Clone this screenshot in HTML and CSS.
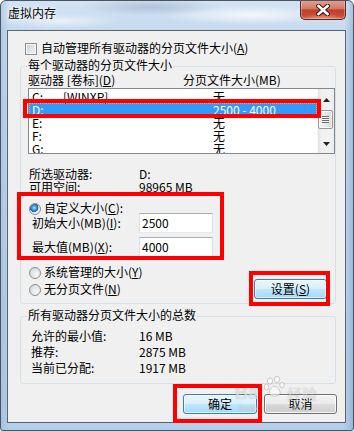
FILE: index.html
```html
<!DOCTYPE html>
<html lang="zh-CN">
<head>
<meta charset="utf-8">
<title>虚拟内存</title>
<link rel="stylesheet" href="styles.css">
</head>
<body>
<div class="window">
  <div class="titlebar">
    <span class="title">虚拟内存</span>
    <button class="close" aria-label="关闭">
      <svg width="14" height="12" viewBox="0 0 14 12">
        <path d="M2.5 2 L11.5 10 M11.5 2 L2.5 10" stroke="#3b1712" stroke-width="4.6" stroke-linecap="square"/>
        <path d="M2.5 2 L11.5 10 M11.5 2 L2.5 10" stroke="#ffffff" stroke-width="2.6" stroke-linecap="square"/>
      </svg>
    </button>
  </div>
  <div class="client">
    <div class="check-row"><span class="checkbox"></span><span>自动管理所有驱动器的分页文件大小(<u>A</u>)</span></div>

    <fieldset class="group group-drives">
      <legend>每个驱动器的分页文件大小</legend>
      <div class="list-head"><span class="col-drive">驱动器 [卷标](<u>D</u>)</span><span>分页文件大小(MB)</span></div>
      <div class="listbox">
        <div class="rows">
          <div class="row"><span>C:</span><span>[WINXP]</span><span>无</span></div>
          <div class="row selected"><span>D:</span><span></span><span>2500 - 4000</span></div>
          <div class="row"><span>E:</span><span></span><span>无</span></div>
          <div class="row"><span>F:</span><span></span><span>无</span></div>
          <div class="row"><span>G:</span><span></span><span>无</span></div>
        </div>
        <div class="scrollbar">
          <div class="sb-btn sb-up"><svg width="7" height="4" viewBox="0 0 7 4"><path d="M3.5 0 L7 4 L0 4 Z" fill="#222"/></svg></div>
          <div class="sb-track"><div class="sb-thumb"><span class="grip"></span></div></div>
          <div class="sb-btn sb-down"><svg width="7" height="4" viewBox="0 0 7 4"><path d="M0 0 L7 0 L3.5 4 Z" fill="#222"/></svg></div>
        </div>
      </div>
      <div class="info">
        <span>所选驱动器:</span><span>D:</span>
        <span>可用空间:</span><span>98965 MB</span>
      </div>
      <div class="options">
        <div class="options-left">
          <div class="radio-row"><span class="radio checked"></span><span>自定义大小(<u>C</u>):</span></div>
          <div class="field-row"><span class="field-label">初始大小(MB)(<u>I</u>):</span><span class="textbox">2500</span></div>
          <div class="field-row field-second"><span class="field-label">最大值(MB)(<u>X</u>):</span><span class="textbox">4000</span></div>
          <div class="radio-row radio-sys"><span class="radio"></span><span>系统管理的大小(<u>Y</u>)</span></div>
          <div class="radio-row radio-none"><span class="radio"></span><span>无分页文件(<u>N</u>)</span></div>
        </div>
        <button class="btn btn-blue btn-set">设置(<u>S</u>)</button>
      </div>
    </fieldset>

    <fieldset class="group group-total">
      <legend>所有驱动器分页文件大小的总数</legend>
      <div class="totals">
        <span>允许的最小值:</span><span>16 MB</span>
        <span>推荐:</span><span>2875 MB</span>
        <span>当前已分配:</span><span>1917 MB</span>
      </div>
    </fieldset>

    <div class="actions">
      <button class="btn btn-blue btn-ok">确定</button>
      <button class="btn btn-cancel">取消</button>
    </div>
  </div>

  <div class="watermark">
    <div class="wm-line">
      <span class="wm-bai">Bai</span>
      <svg class="wm-paw" width="24" height="24" viewBox="0 0 24 24">
        <g fill="rgba(255,255,255,0.55)" stroke="rgba(120,120,120,0.35)" stroke-width="1">
          <ellipse cx="7" cy="6" rx="2.6" ry="3.2"/>
          <ellipse cx="14" cy="4.5" rx="2.6" ry="3.2"/>
          <ellipse cx="3.5" cy="12" rx="2.3" ry="2.8"/>
          <ellipse cx="19" cy="10" rx="2.3" ry="2.8"/>
          <path d="M11 11 C7 13 5 17 7 20 C9 22 14 21 16 20 C19 18 16 12 11 11 Z"/>
        </g>
      </svg>
      <span class="wm-jy">经验</span>
    </div>
    <span class="wm-url">jingyan.baidu.com</span>
  </div>

  <div class="mark mark-list"></div>
  <div class="mark mark-custom"></div>
  <div class="mark mark-set"></div>
  <div class="mark mark-ok"></div>
</div>
</body>
</html>
```
FILE: styles.css
```css
* { box-sizing: border-box; }
html, body { margin: 0; padding: 0; background: #ffffff; }
body {
  font-family: "Noto Sans CJK SC", "Noto Sans", sans-serif;
  font-size: 12px;
  color: #000;
}
u { text-underline-offset: 1px; }

.window {
  position: relative;
  width: 354px;
  height: 431px;
  border: 1px solid #4a5562;
  border-radius: 6px 6px 3px 3px;
  padding: 0 7px 7px 6px;
  display: flex;
  flex-direction: column;
  overflow: hidden;
  background:
    radial-gradient(ellipse 70px 9px at 150px 6px, rgba(150,170,195,0.55), rgba(150,170,195,0) 100%),
    radial-gradient(ellipse 90px 10px at 250px 14px, rgba(255,255,255,0.75), rgba(255,255,255,0) 100%),
    radial-gradient(ellipse 60px 8px at 60px 20px, rgba(255,255,255,0.6), rgba(255,255,255,0) 100%),
    linear-gradient(to right, rgba(140,170,205,0.35) 0, rgba(140,170,205,0) 8px, rgba(140,170,205,0) 344px, rgba(120,155,200,0.45) 352px),
    linear-gradient(to bottom, #d3e3f3 0, #c5d9ee 30px, #bad1ea 60%, #b4cde8 100%);
}

/* title bar */
.titlebar {
  height: 29px;
  display: flex;
  align-items: flex-start;
  padding: 6px 0 0 1px;
}
.title {
  line-height: 12px;
  font-size: 12px;
  color: #000;
  text-shadow: 0 0 6px #fff, 0 0 3px #fff;
}
.close {
  margin: -7px 0 0 auto;
  width: 46px;
  height: 20px;
  padding: 0;
  border: 1px solid #5b2720;
  border-top: none;
  border-radius: 0 0 5px 5px;
  background:
    radial-gradient(ellipse 20px 6px at 50% 100%, rgba(255,170,140,0.7), rgba(255,170,140,0) 100%),
    linear-gradient(#e3a293 0%, #d27a68 45%, #c0402d 52%, #c54a34 80%, #d4644b 100%);
  box-shadow: inset 0 0 0 1px rgba(255,255,255,0.3);
  display: flex;
  align-items: center;
  justify-content: center;
}

/* client area */
.client {
  width: 339px;
  height: 393px;
  border: 1px solid #5a6572;
  background: #f0f0f0;
  display: flex;
  flex-direction: column;
  align-items: flex-start;
}

.check-row {
  display: flex;
  margin: 11px 0 0 17px;
  height: 12px;
  line-height: 12px;
}
.checkbox {
  width: 12px;
  height: 12px;
  margin: 1px 4px 0 0;
  border: 1px solid #8e8f8f;
  background: linear-gradient(135deg, #c9cdd2 0%, #e4e6e8 55%, #f6f6f6 100%);
  box-shadow: inset 0 0 0 1px #f4f4f4;
}

/* group boxes */
.group {
  margin: 5px 0 0 12px;
  width: 316px;
  min-width: 0;
  border: 1px solid #d5dfe5;
  border-radius: 3px;
  padding: 0 0 4px 0;
}
.group legend {
  margin-left: 6px;
  padding: 0 1px 3px;
  line-height: 12px;
}
.group-total { padding-bottom: 7px; }

.list-head {
  display: flex;
  margin-left: 7px;
  height: 12px;
  line-height: 12px;
}
.col-drive { width: 155px; }

.listbox {
  margin: 2px 0 0 7px;
  width: 307px;
  height: 66px;
  border: 1px solid #828790;
  background: #fff;
  display: flex;
  overflow: hidden;
}
.rows {
  flex: 1;
  padding-top: 1px;
  overflow: hidden;
}
.row {
  height: 13px;
  line-height: 13px;
  display: grid;
  grid-template-columns: 31px 150px 1fr;
  padding-left: 3px;
  white-space: nowrap;
}
.row.selected {
  background: #3399ff;
  color: #fff;
  outline: 1px dotted #f0a24a;
  outline-offset: -1px;
}
.scrollbar {
  width: 17px;
  display: flex;
  flex-direction: column;
  background: linear-gradient(to right, #e2e2e2 0, #efefef 3px, #f2f2f2 12px, #e9e9e9 17px);
  border-left: 1px solid #f7f7f7;
}
.sb-btn {
  display: flex;
  align-items: center;
  justify-content: center;
}
.sb-up { height: 20px; padding-top: 1px; }
.sb-track { height: 25px; padding-top: 1px; }
.sb-down { flex: 1; }
.sb-thumb {
  margin-left: 0;
  width: 15px;
  height: 19px;
  border: 1px solid #979797;
  border-radius: 2px;
  background: linear-gradient(to right, #f5f5f5 0, #e6e6e6 55%, #d9d9d9 100%);
  box-shadow: inset 0 0 0 1px rgba(255,255,255,0.7);
  display: flex;
  align-items: center;
  justify-content: center;
}
.grip {
  width: 7px;
  height: 7px;
  background: repeating-linear-gradient(to bottom, #6d6d6d 0, #6d6d6d 1px, #f4f4f4 1px, #f4f4f4 2px);
}

.info {
  display: grid;
  grid-template-columns: 110px auto;
  margin: 13px 0 0 8px;
  line-height: 13px;
}

.options {
  display: flex;
  width: 100%;
  margin-top: 9px;
}
.options-left { margin-bottom: 4px; }
.radio-row {
  display: flex;
  height: 12px;
  line-height: 12px;
  margin-left: 8px;
}
.radio {
  width: 12px;
  height: 12px;
  margin: 1px 3px 0 0;
  border-radius: 50%;
  border: 1px solid #8e8f8f;
  background: radial-gradient(circle at 65% 65%, #f8f8f8 0, #e3e4e6 50%, #c8cbd0 100%);
}
.radio.checked {
  background:
    radial-gradient(circle at 42% 38%, #bfe6ff 0, #4aa3e8 22%, #1c5ca8 48%, rgba(28,92,168,0) 52%),
    radial-gradient(circle at 65% 65%, #f8f8f8 0, #e3e4e6 50%, #c8cbd0 100%);
}
.field-row {
  display: flex;
  align-items: center;
  margin: -1px 0 0 11px;
  height: 20px;
}
.field-second { margin-top: 4px; }
.field-label {
  width: 107px;
  line-height: 12px;
}
.textbox {
  width: 74px;
  height: 20px;
  border: 1px solid #dbdfe6;
  border-top-color: #abadb3;
  border-bottom-color: #e3e9ef;
  background: #fff;
  padding-left: 2px;
  line-height: 18px;
}
.radio-sys { margin-top: 9px; }
.radio-none { margin-top: 5px; }

.btn {
  font: inherit;
  font-size: 12px;
  color: #000;
  height: 20px;
  padding: 0;
  line-height: 18px;
  border-radius: 3px;
  border: 1px solid #707070;
  background: linear-gradient(#f2f2f2 0%, #ebebeb 48%, #dddddd 52%, #cfcfcf 100%);
  box-shadow: inset 0 0 0 1px rgba(255,255,255,0.75);
}
.btn-blue {
  border-color: #3c7fb1;
  background: linear-gradient(#eaf6fd 0%, #d9f0fc 48%, #bee6fd 52%, #a7d9f5 100%);
  box-shadow: inset 0 0 0 1px rgba(255,255,255,0.6);
}
.btn-set {
  width: 73px;
  margin: 0 8px 0 auto;
  align-self: flex-end;
}

.totals {
  display: grid;
  grid-template-columns: 108px auto;
  margin: 4px 0 0 10px;
  line-height: 16px;
}

.actions {
  display: flex;
  width: 100%;
  justify-content: flex-end;
  gap: 7px;
  margin-top: 10px;
  padding-right: 8px;
}
.btn-ok { width: 74px; }
.btn-cancel { width: 73px; }

/* watermark overlay */
.watermark {
  position: absolute;
  left: 234px;
  top: 372px;
  display: flex;
  flex-direction: column;
  align-items: flex-start;
  color: rgba(255,255,255,0.6);
  text-shadow: 0 0 1px rgba(90,90,90,0.45);
  pointer-events: none;
}
.wm-line {
  display: flex;
  align-items: flex-end;
  height: 30px;
}
.wm-bai {
  font-family: "Liberation Sans", sans-serif;
  font-weight: bold;
  font-size: 18px;
  line-height: 18px;
  margin-bottom: 1px;
}
.wm-paw { margin: 0 0 4px 0; }
.wm-jy {
  font-size: 15px;
  line-height: 16px;
  margin-bottom: 1px;
}
.wm-url {
  font-family: "Liberation Sans", sans-serif;
  font-size: 8px;
  line-height: 9px;
  margin-left: 4px;
}

/* red annotation boxes */
.mark {
  position: absolute;
  border: 4px solid #ff0000;
  pointer-events: none;
}
.mark-list { left: 22px; top: 98px; width: 298px; height: 19px; }
.mark-custom { left: 16px; top: 191px; width: 207px; height: 68px; }
.mark-set { left: 248px; top: 270px; width: 81px; height: 35px; }
.mark-ok { left: 172px; top: 383px; width: 89px; height: 39px; }
```
